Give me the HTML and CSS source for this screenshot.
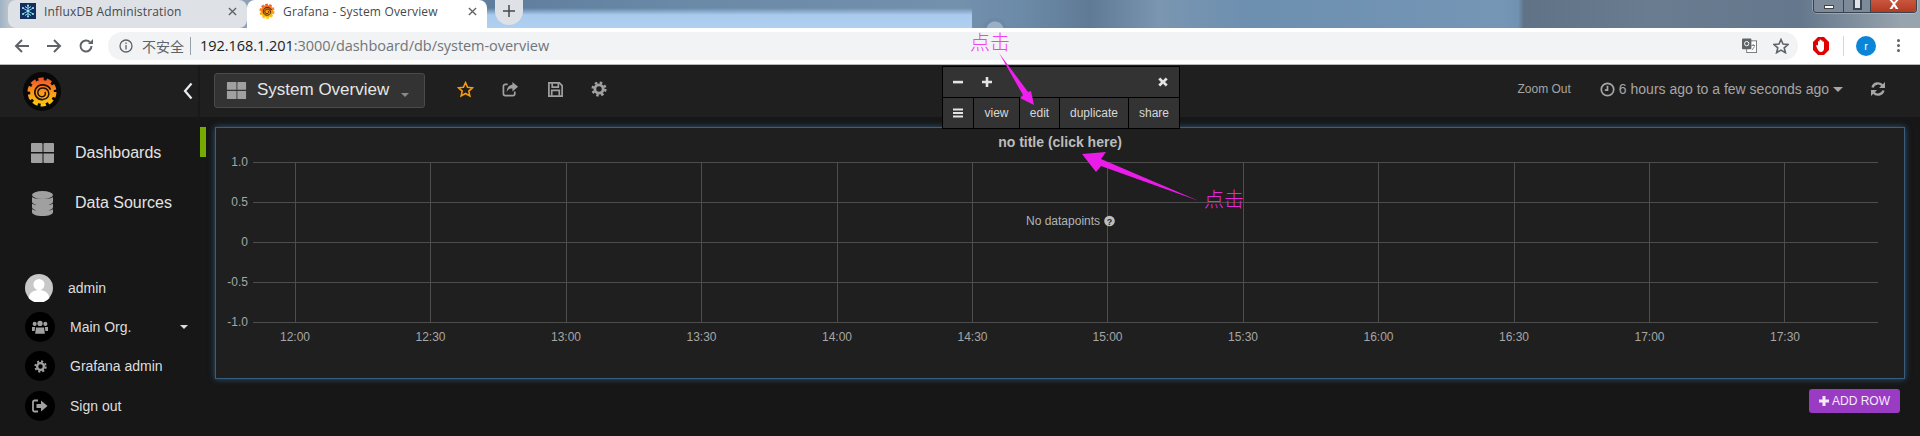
FILE: index.html
```html
<!DOCTYPE html>
<html lang="zh">
<head>
<meta charset="utf-8">
<title>Grafana - System Overview</title>
<link rel="stylesheet" href="styles.css">
</head>
<body>
<svg class="defs" width="0" height="0" aria-hidden="true">
  <defs>
    <linearGradient id="flame2" gradientUnits="userSpaceOnUse" x1="0" y1="4" x2="0" y2="36">
      <stop offset="0" stop-color="#ee4a26"/>
      <stop offset=".5" stop-color="#f8941d"/>
      <stop offset="1" stop-color="#fdd10a"/>
    </linearGradient>
    <symbol id="i-grafana" viewBox="0 0 40 40">
      <circle cx="20" cy="20.500" r="12.500" fill="url(#flame2)"/>
      <circle cx="20" cy="20.500" r="13.500" fill="none" stroke="url(#flame2)" stroke-width="3.500" stroke-dasharray="5.500 3"/>
      <path d="M29 18C26 12 17 11 13.500 17 10.500 23 15 29 21 28.500" fill="none" stroke="#241004" stroke-width="1.800"/>
      <path d="M21 28.500C26 28 28.500 23.500 26.500 19.500 24.500 15.500 18 15 16 19 14.500 22.500 17 25.500 20 25.500 23 25.500 24.500 22.500 23 20.500" fill="none" stroke="#241004" stroke-width="1.600"/>
    </symbol>
    <symbol id="i-grid" viewBox="0 0 23 20">
      <path d="M1 0h9.500a1 1 0 0 1 1 1v8H0V1a1 1 0 0 1 1-1zM13.500 0H22a1 1 0 0 1 1 1v8H12.500V1a1 1 0 0 1 1-1zM0 10.500h11.500V20H1a1 1 0 0 1-1-1zM12.500 10.500H23V19a1 1 0 0 1-1 1h-8.500a1 1 0 0 1-1-1z"/>
    </symbol>
    <symbol id="i-gear" viewBox="0 0 20 20">
      <circle cx="10" cy="10" r="5.200" fill="none" stroke="currentColor" stroke-width="3.600"/>
      <circle cx="10" cy="10" r="8" fill="none" stroke="currentColor" stroke-width="3" stroke-dasharray="3.200 3.080"/>
    </symbol>
  </defs>
</svg>

<header class="tabstrip">
  <div class="tab tab-off">
    <svg class="favicon" viewBox="0 0 16 16"><rect width="16" height="16" fill="#12305f"/><g stroke="#7fd3ee" stroke-width="1" fill="none"><path d="M8 2v12M2.800 5l10.400 6M2.800 11l10.400-6M5 3.500l3 2 3-2M5 12.500l3-2 3 2"/></g><g fill="#a5e2f5"><circle cx="8" cy="2.500" r="1"/><circle cx="8" cy="13.500" r="1"/><circle cx="3" cy="5" r="1"/><circle cx="13" cy="5" r="1"/><circle cx="3" cy="11" r="1"/><circle cx="13" cy="11" r="1"/><circle cx="8" cy="8" r="1.200"/></g></svg>
    <span class="tab-title">InfluxDB Administration</span>
    <svg class="tab-x" viewBox="0 0 10 10"><path d="M1 1l8 8M9 1l-8 8"/></svg>
  </div>
  <div class="tab tab-on">
    <svg class="favicon" viewBox="4 4 32 32"><use href="#i-grafana" width="40" height="40"/></svg>
    <span class="tab-title">Grafana - System Overview</span>
    <svg class="tab-x" viewBox="0 0 10 10"><path d="M1 1l8 8M9 1l-8 8"/></svg>
  </div>
  <div class="newtab"><svg viewBox="0 0 12 12"><path d="M6 0v12M0 6h12"/></svg></div>
  <div class="winctl">
    <span class="win win-min"><i></i></span>
    <span class="win win-max"><i></i></span>
    <span class="win win-close"><svg viewBox="0 0 12 8"><path d="M2 0l3 3.500L2 8h2.400L6 5.500 7.600 8H10L7 3.500 10 0H7.800L6 2 4.200 0z"/></svg></span>
  </div>
</header>

<nav class="toolbar">
  <svg class="tb-ico" viewBox="0 0 16 16"><path d="M15 8H2M8 2L2 8l6 6"/></svg>
  <svg class="tb-ico" viewBox="0 0 16 16"><path d="M1 8h13M8 2l6 6-6 6"/></svg>
  <svg class="tb-ico" viewBox="0 0 16 16"><path d="M13.500 8A5.500 5.500 0 1 1 12 4.200"/><path class="solid" d="M10 6h5V1z"/></svg>
  <div class="omnibox">
    <svg class="omni-info" viewBox="0 0 14 14"><circle cx="7" cy="7" r="6"/><path d="M7 6v4.500M7 3.400v1.500"/></svg>
    <span class="omni-warn">不安全</span>
    <span class="omni-sep"></span>
    <span class="omni-url"><b>192.168.1.201</b>:3000/dashboard/db/system-overview</span>
    <svg class="omni-tr" viewBox="0 0 16 16"><rect x="5" y="3" width="10.500" height="12.500" fill="#fff" stroke="#777"/><rect x="0" y="0.500" width="10" height="11.500" rx="1" fill="#5f6368"/><circle cx="5" cy="6" r="2.300" fill="none" stroke="#fff"/><path d="M10 8h4M12 6.500v1M10.500 13l3-4" stroke="#777" fill="none"/></svg>
    <svg class="omni-star" viewBox="0 0 16 16"><path d="M8 1.500l2 4.600 5 .4-3.800 3.300 1.200 4.900L8 12.100l-4.400 2.600 1.200-4.900L1 6.500l5-.4z"/></svg>
  </div>
  <svg class="ext-stop" viewBox="0 0 16 18"><path fill="#e00000" d="M5 0h6l5 5v8l-5 5H5l-5-5V5z"/><path fill="#fff" d="M5 8V4.500a.8.8 0 0 1 1.500 0V3a.8.8 0 0 1 1.500 0v.8a.8.8 0 0 1 1.500 0V5a.8.8 0 0 1 1.500 0v6.500c0 2-1.500 3.500-3 3.500S5.500 14 4 11l-.8-2c-.2-.8.8-1.200 1.300-.6z"/></svg>
  <span class="tb-sep"></span>
  <span class="profile">r</span>
  <span class="kebab"><i></i><i></i><i></i></span>
</nav>

<div class="app">
  <aside class="side">
    <div class="side-head">
      <span class="logo"><svg viewBox="0 0 40 40"><use href="#i-grafana" width="40" height="40"/></svg></span>
      <svg class="collapse" viewBox="0 0 10 18"><path d="M8.500 1.500L2 9l6.500 7.500"/></svg>
    </div>
    <ul class="menu">
      <li class="menu-item"><span class="menu-ico"><svg class="ico-grid" viewBox="0 0 23 20"><use href="#i-grid" width="23" height="20"/></svg></span>Dashboards</li>
      <li class="menu-item"><span class="menu-ico"><svg class="ico-db" viewBox="0 0 21 25"><ellipse cx="10.500" cy="4" rx="10.500" ry="4"/><path d="M0 6c2 2.500 19 2.500 21 0v4.500c0 2.500-4.500 4-10.500 4S0 13 0 10.500zM0 12.500c2 2.500 19 2.500 21 0V16c0 2.500-4.500 4-10.500 4S0 18.500 0 16zM0 18c2 2.500 19 2.500 21 0v3c0 2.500-4.500 4-10.500 4S0 23.500 0 21z"/></svg></span>Data Sources</li>
    </ul>
    <ul class="usermenu">
      <li class="user-item">
        <span class="avatar"><svg viewBox="0 0 28 28"><circle cx="14" cy="14" r="14" fill="#c8c8c8"/><circle cx="14" cy="10.500" r="5.500" fill="#fff"/><path d="M3.500 24c1-6 6-8 10.500-8s9.500 2 10.500 8A14 14 0 0 1 3.500 24z" fill="#fff"/></svg></span>
        <span class="user-name">admin</span>
      </li>
      <li class="user-item">
        <span class="badge"><svg viewBox="0 0 18 15"><circle cx="9" cy="3.500" r="3"/><circle cx="3" cy="4" r="2.300"/><circle cx="15" cy="4" r="2.300"/><path d="M4.500 8h9l1 7h-11zM0 7.500h3.500L3 12H0zM14.500 7.500H18V12h-3z"/></svg></span>
        <span class="user-label">Main Org.</span>
        <span class="org-caret"></span>
      </li>
      <li class="user-item">
        <span class="badge"><svg class="ico-gear" viewBox="0 0 20 20"><use href="#i-gear" width="20" height="20"/></svg></span>
        <span class="user-label">Grafana admin</span>
      </li>
      <li class="user-item">
        <span class="badge"><svg viewBox="0 0 16 14"><path d="M6 1.500H2.500A1.500 1.500 0 0 0 1 3v8a1.500 1.500 0 0 0 1.500 1.500H6" fill="none" stroke="#a0a0a0" stroke-width="1.800"/><path d="M4.500 5H9V1.500L15.500 7 9 12.500V9H4.500z"/></svg></span>
        <span class="user-label">Sign out</span>
      </li>
    </ul>
  </aside>

  <main class="main">
    <div class="topnav">
      <div class="dash-btn">
        <svg class="dash-ico" viewBox="0 0 23 20"><use href="#i-grid" width="23" height="20"/></svg>
        <span class="dash-name">System Overview</span>
        <span class="dash-caret"></span>
      </div>
      <div class="nav-icons">
        <svg class="nav-ico star" viewBox="0 0 18 18"><path d="M9 1.800l2.200 4.800 5.200.6-3.900 3.500 1.100 5.100L9 13.200l-4.600 2.600 1.100-5.100L1.600 7.200l5.200-.6z"/></svg>
        <svg class="nav-ico stroke" viewBox="0 0 18 18"><path d="M6 3.500H3.500A2 2 0 0 0 1.500 5.500v8a2 2 0 0 0 2 2h8a2 2 0 0 0 2-2V11"/><path class="solid" d="M11 1l6 5-6 5V8C8 8 6 9 5 12c0-5 2-7.500 6-8z"/></svg>
        <svg class="nav-ico stroke" viewBox="0 0 18 18"><path d="M2 2h11l3 3v11H2z"/><path d="M5.500 2.500v4h6.500v-4M5 15.500V10h8v5.500"/></svg>
        <svg class="nav-ico gear" viewBox="0 0 20 20"><use href="#i-gear" width="20" height="20"/></svg>
      </div>
      <div class="nav-right">
        <span class="zoom-out">Zoom Out</span>
        <span class="timepick">
          <svg class="clock" viewBox="0 0 14 14"><circle cx="7" cy="7" r="5.800"/><path d="M7 3.500V7.500H4.500"/></svg>
          6 hours ago to a few seconds ago
          <span class="time-caret"></span>
        </span>
        <svg class="refresh" viewBox="0 0 16 16"><path d="M2.500 6.500A5.800 5.800 0 0 1 12.500 4.500M13.500 9.500A5.800 5.800 0 0 1 3.500 11.500"/><path class="solid" d="M15 1v6H9zM1 15V9h6z"/></svg>
      </div>
    </div>

    <div class="row">
      <span class="row-handle"></span>
      <section class="panel">
        <h2 class="panel-title">no title (click here)</h2>
        <svg class="chart" viewBox="216 156 1688 222" width="1688" height="222">
          <g class="grid">
            <path d="M253 162H1878M253 202H1878M253 242H1878M253 282H1878M253 322H1878"/>
            <path d="M295 162V322M430.500 162V322M566 162V322M701.500 162V322M837 162V322M972.500 162V322M1107.500 162V322M1243 162V322M1378.500 162V322M1514 162V322M1649.500 162V322M1784.500 162V322"/>
          </g>
          <g class="ylab">
            <text x="248" y="166">1.0</text>
            <text x="248" y="206">0.5</text>
            <text x="248" y="246">0</text>
            <text x="248" y="286">-0.5</text>
            <text x="248" y="326">-1.0</text>
          </g>
          <g class="xlab">
            <text x="295" y="341">12:00</text>
            <text x="430.500" y="341">12:30</text>
            <text x="566" y="341">13:00</text>
            <text x="701.500" y="341">13:30</text>
            <text x="837" y="341">14:00</text>
            <text x="972.500" y="341">14:30</text>
            <text x="1107.500" y="341">15:00</text>
            <text x="1243" y="341">15:30</text>
            <text x="1378.500" y="341">16:00</text>
            <text x="1514" y="341">16:30</text>
            <text x="1649.500" y="341">17:00</text>
            <text x="1785" y="341">17:30</text>
          </g>
          <text class="nodata" x="1026" y="225">No datapoints</text>
          <circle class="help" cx="1109.500" cy="221" r="5.300"/>
          <text class="help-q" x="1109.500" y="224.500">?</text>
        </svg>
      </section>
    </div>

    <div class="actions">
      <button class="add-row"><svg viewBox="0 0 10 10"><path d="M3.500 0h3v3.500H10v3H6.500V10h-3V6.500H0v-3h3.500z"/></svg>ADD ROW</button>
    </div>
  </main>
</div>

<div class="row-menu">
  <div class="rm-top">
    <svg class="rm-ico" viewBox="0 0 10 10"><path d="M0 3.800h10v2.600H0z"/></svg>
    <svg class="rm-ico rm-plus" viewBox="0 0 10 10"><path d="M3.700 0h2.600v3.700H10v2.600H6.300V10H3.700V6.300H0V3.700h3.700z"/></svg>
    <svg class="rm-ico rm-x" viewBox="0 0 10 10"><path d="M2.200.5L5 3.200 7.800.5l1.900 1.900L7 5l2.700 2.600-1.900 1.900L5 6.800 2.200 9.500.3 7.600 3 5 .3 2.400z"/></svg>
  </div>
  <div class="rm-bottom">
    <span class="rm-cell"><svg class="rm-ico" viewBox="0 0 10 9"><path d="M0 0h10v2H0zM0 3.500h10v2H0zM0 7h10v2H0z"/></svg></span>
    <span class="rm-cell">view</span>
    <span class="rm-cell">edit</span>
    <span class="rm-cell">duplicate</span>
    <span class="rm-cell">share</span>
  </div>
</div>

<svg class="arrows" viewBox="0 0 1920 436" width="1920" height="436" aria-hidden="true">
  <polygon class="arrow1" points="999,53 1028,92 1031,91 1034,105 1020,98 1023,95"/>
  <polygon class="arrow2" points="1082,154 1106,152 1101,159 1199,201 1101,166 1096,172"/>
</svg>
<span class="note note-top">点击</span>
<span class="note note-side">点击</span>
</body>
</html>
```
FILE: styles.css
```css
* { box-sizing: border-box; }
html, body { margin: 0; padding: 0; }
body {
  position: relative;
  width: 1920px;
  height: 436px;
  overflow: hidden;
  background: #171717;
  font-family: "Liberation Sans", Arial, sans-serif;
}
ul { list-style: none; margin: 0; padding: 0; }
.defs { position: absolute; }

/* browser tab strip */
.tabstrip {
  display: flex;
  align-items: flex-start;
  height: 28px;
  padding-left: 8px;
  background:
    radial-gradient(circle at 995px 30px, rgba(195,210,228,.5) 0 8px, #6b89a6 9px 12px, transparent 13px),
    linear-gradient(rgba(172,205,240,0) 8px, #a9cbee 15px, #b0d0f0) 487px 0 / 485px 28px no-repeat,
    linear-gradient(90deg, #9fb2c4 0, #b9c3cc 8px, #5f7e9e 490px, #6b8aa8 700px, #7390ad 960px, #6c8ba8 1020px, #5f7a95 1090px, #7a96b0 1160px, #6d8fb0 1250px, #7596b5 1500px, #7193b3 1518px, #5f7286 1524px, #6a7c90 1650px, #64778c 1800px, #97a3ad 1900px);
}
.tab {
  display: flex;
  align-items: center;
  height: 28px;
  padding-left: 12px;
  font-family: "Open Sans", "Noto Sans", sans-serif;
  font-size: 12px;
  letter-spacing: .16px;
  color: #45494d;
}
.tab-off { width: 239px; background: #dee1e6; border-radius: 8px; }
.tab-on { width: 240px; background: #fff; border-radius: 8px 8px 0 0; }
.favicon { width: 16px; height: 16px; flex: none; margin-top: -6px; }
.tab-title { margin-left: 8px; margin-top: -5px; white-space: nowrap; flex: 1; }
.tab-x { width: 9px; height: 9px; margin: -6px 10px 0 0; fill: none; stroke: #5f6368; stroke-width: 1.500; }
.newtab {
  width: 28px;
  height: 25px;
  margin-left: 8px;
  border-radius: 0 0 14px 14px;
  background: #dee1e6;
  display: flex;
  align-items: center;
  justify-content: center;
}
.newtab svg { width: 12px; height: 12px; fill: none; stroke: #45494d; stroke-width: 1.500; margin-top: -3px; }
.winctl {
  display: flex;
  height: 13px;
  margin-left: auto;
  margin-right: 3px;
  border: 1px solid #39434e;
  border-top: 0;
  border-radius: 0 0 4px 4px;
  box-shadow: 0 0 0 1px rgba(255,255,255,.25);
  overflow: hidden;
}
.win { display: flex; align-items: center; justify-content: center; height: 12px; }
.win-min { width: 30px; background: #7d8a99; border-right: 1px solid #3d4650; }
.win-min i { width: 10px; height: 4px; background: #fff; border: 1px solid #444; display: block; margin-top: 2px; }
.win-max { width: 27px; background: #7d8a99; border-right: 1px solid #3d4650; }
.win-max i { width: 9px; height: 12px; background: #dfe4ea; border: 2px solid #3d4650; display: block; margin-top: -4px; }
.win-close { width: 45px; background: linear-gradient(#c8563e, #b53a22); }
.win-close svg { width: 14px; height: 9px; fill: #fff; margin-top: -4px; }

/* browser toolbar */
.toolbar {
  display: flex;
  align-items: center;
  height: 37px;
  padding: 0 0 1px 14px;
  background: #fff;
  border-bottom: 1px solid #b9b9b9;
}
.tb-ico { width: 16px; height: 16px; margin-right: 16px; fill: none; stroke: #5f6368; stroke-width: 2; flex: none; }
.tb-ico .solid { fill: #5f6368; stroke: none; }
.omnibox {
  display: flex;
  align-items: center;
  width: 1690px;
  height: 28px;
  margin-left: -2px;
  padding-left: 11px;
  border-radius: 14px;
  background: #f1f3f4;
}
.omni-info { width: 14px; height: 14px; fill: none; stroke: #5f6368; stroke-width: 1.300; flex: none; }
.omni-warn { margin-left: 9px; font: 14px "Noto Sans CJK SC", sans-serif; color: #5f6368; }
.omni-sep { width: 1px; height: 18px; margin: 0 9px 0 6px; background: #9aa0a6; }
.omni-url { flex: 1; font: 14.500px "Open Sans", sans-serif; color: #70757a; white-space: nowrap; letter-spacing: -.04px; }
.omni-url b { font-weight: 400; color: #202124; }
.omni-tr { width: 15px; height: 15px; flex: none; }
.omni-star { width: 16px; height: 16px; margin: 0 9px 0 16px; fill: none; stroke: #5f6368; stroke-width: 1.600; flex: none; }
.ext-stop { width: 16px; height: 18px; margin-left: 15px; flex: none; }
.tb-sep { width: 1px; height: 20px; margin-left: 14px; background: #d6d6d6; }
.profile {
  width: 20px;
  height: 20px;
  margin-left: 12px;
  border-radius: 50%;
  background: #0b85d8;
  color: #fff;
  font: 11px/20px "Liberation Sans", sans-serif;
  text-align: center;
}
.kebab { display: flex; flex-direction: column; gap: 2px; margin-left: 21px; }
.kebab i { width: 3px; height: 3px; background: #5f6368; border-radius: 50%; display: block; }

/* application */
.app { display: flex; height: 371px; }
.side { width: 200px; flex: none; background: #171717; }
.side-head {
  display: flex;
  align-items: center;
  height: 52px;
  padding-left: 23px;
  background: #1f1f1f;
  border-right: 2px solid #191919;
}
.logo { width: 38px; height: 39px; border-radius: 50%; background: #080808; display: block; }
.logo svg { width: 38px; height: 39px; display: block; }
.collapse { width: 10px; height: 18px; margin-left: 122px; fill: none; stroke: #e8eef4; stroke-width: 2.200; }
.menu { padding-top: 11px; }
.menu-item {
  display: flex;
  align-items: center;
  height: 50px;
  font-size: 16px;
  color: #e3e3e3;
}
.menu-ico { width: 75px; display: flex; justify-content: center; padding-left: 10px; fill: #a0a0a0; }
.ico-grid { width: 23px; height: 20px; }
.ico-db { width: 21px; height: 25px; }
.usermenu { padding-top: 40px; }
.user-item {
  display: flex;
  align-items: center;
  height: 39.330px;
  padding-left: 25px;
  font-size: 14px;
  color: #dedede;
}
.avatar { width: 28px; height: 28px; display: block; }
.avatar svg { display: block; width: 28px; height: 28px; }
.user-name { margin-left: 15px; }
.badge {
  width: 30px;
  height: 30px;
  border-radius: 50%;
  background: #000;
  display: flex;
  align-items: center;
  justify-content: center;
  fill: #a0a0a0;
  color: #a0a0a0;
  flex: none;
}
.badge svg { width: 16px; height: 14px; }
.badge .ico-gear { width: 13px; height: 13px; }
.user-label { margin-left: 15px; }
.org-caret {
  width: 0;
  height: 0;
  margin-left: 49px;
  border: 4.500px solid transparent;
  border-top-color: #dcdcdc;
  border-bottom: 0;
}

.main { flex: 1; min-width: 0; }
.topnav {
  display: flex;
  align-items: center;
  height: 52px;
  padding-left: 14px;
  background: #1f1f1f;
}
.dash-btn {
  display: flex;
  align-items: center;
  width: 211px;
  height: 35px;
  margin-top: -2px;
  padding-left: 11px;
  background: #333;
  border: 1px solid #4a4a4a;
  border-radius: 3px;
}
.dash-ico { width: 21px; height: 17px; fill: #a0a0a0; flex: none; }
.dash-name { margin-left: 10px; font-size: 17px; color: #e6e6e6; white-space: nowrap; }
.dash-caret {
  margin: 10px 0 0 12px;
  border: 4px solid transparent;
  border-top-color: #8a8a8a;
  border-bottom: 0;
}
.nav-icons { display: flex; align-items: center; gap: 28px; margin-left: 32px; margin-top: -4px; }
.nav-ico { width: 17px; height: 17px; flex: none; }
.star { fill: none; stroke: #f39c12; stroke-width: 1.700; }
.stroke { fill: none; stroke: #a0a0a0; stroke-width: 1.800; }
.stroke .solid { fill: #a0a0a0; stroke: none; }
.gear { color: #a0a0a0; width: 16px; height: 16px; margin-left: -1px; }
.nav-right { display: flex; align-items: center; margin-left: auto; padding-right: 34px; color: #a6a6a6; margin-top: -4px; }
.zoom-out { font-size: 12px; margin-right: 29px; }
.timepick { display: flex; align-items: center; gap: 4px; font-size: 14px; white-space: nowrap; }
.clock { width: 15px; height: 15px; fill: none; stroke: #a6a6a6; stroke-width: 1.600; }
.time-caret { border: 5px solid transparent; border-top-color: #a6a6a6; border-bottom: 0; }
.refresh { width: 16px; height: 16px; margin-left: 27px; fill: none; stroke: #a6a6a6; stroke-width: 2.400; }
.refresh .solid { fill: #a6a6a6; stroke: none; }

.row { display: flex; gap: 9px; padding: 10px 15px 0 0; }
.row-handle { width: 6px; height: 30px; background: #76ac00; flex: none; }
.panel {
  flex: 1;
  height: 252px;
  background: #1f1f1f;
  border: 1px solid #3a5f7e;
  box-shadow: 0 0 6px rgba(70,140,205,.55);
}
.panel-title {
  margin: 0;
  height: 28px;
  font-size: 14px;
  font-weight: 700;
  line-height: 28px;
  text-align: center;
  color: #bcbcbc;
}
.chart { display: block; }
.grid path { fill: none; stroke: #4d4d4d; stroke-width: 1; shape-rendering: crispEdges; }
.ylab text { font-size: 12px; fill: #a6a6a6; text-anchor: end; }
.xlab text { font-size: 12px; fill: #a6a6a6; text-anchor: middle; }
.nodata { font-size: 12px; fill: #b4b4b4; }
.help { fill: #bdbdbd; }
.help-q { font-size: 9px; font-weight: 700; fill: #1f1f1f; text-anchor: middle; }

.actions { display: flex; justify-content: flex-end; padding: 10px 20px 0 0; }
.add-row {
  display: flex;
  align-items: center;
  gap: 3px;
  width: 91px;
  height: 24px;
  padding: 0 0 0 10px;
  border: 0;
  border-radius: 3px;
  background: #9a3bc4;
  color: #f4eafa;
  font: 12px "Liberation Sans", sans-serif;
}
.add-row svg { width: 10px; height: 10px; fill: #f4eafa; }

/* row menu floating above the panel */
.row-menu {
  position: absolute;
  left: 942px;
  top: 66px;
  width: 238px;
  height: 63px;
  background: #000;
  border: 1px solid #000;
  display: flex;
  flex-direction: column;
  gap: 1px;
  fill: #e4e4e4;
  font-size: 12px;
  color: #d8d8d8;
}
.rm-top {
  display: flex;
  align-items: center;
  height: 30px;
  padding-left: 10px;
  background: #333;
}
.rm-ico { width: 10px; height: 10px; display: block; flex: none; }
.rm-plus { margin-left: 19px; }
.rm-x { margin-left: auto; margin-right: 11px; }
.rm-bottom {
  display: grid;
  grid-template-columns: 30px 45px 39px 68px 50px;
  gap: 1px;
  height: 30px;
}
.rm-cell { display: flex; align-items: center; justify-content: center; background: #333; }

/* hand-drawn annotations */
.arrows { position: absolute; left: 0; top: 0; pointer-events: none; }
.arrow1 { fill: #ef1ff0; }
.arrow2 { fill: #ec1ce8; }
.note {
  position: absolute;
  font: 300 20px/20px "Noto Sans CJK SC", sans-serif;
  white-space: nowrap;
}
.note-top { left: 970px; top: 32px; color: #f53df5; }
.note-side { left: 1204px; top: 189px; color: #e326e0; }
```
